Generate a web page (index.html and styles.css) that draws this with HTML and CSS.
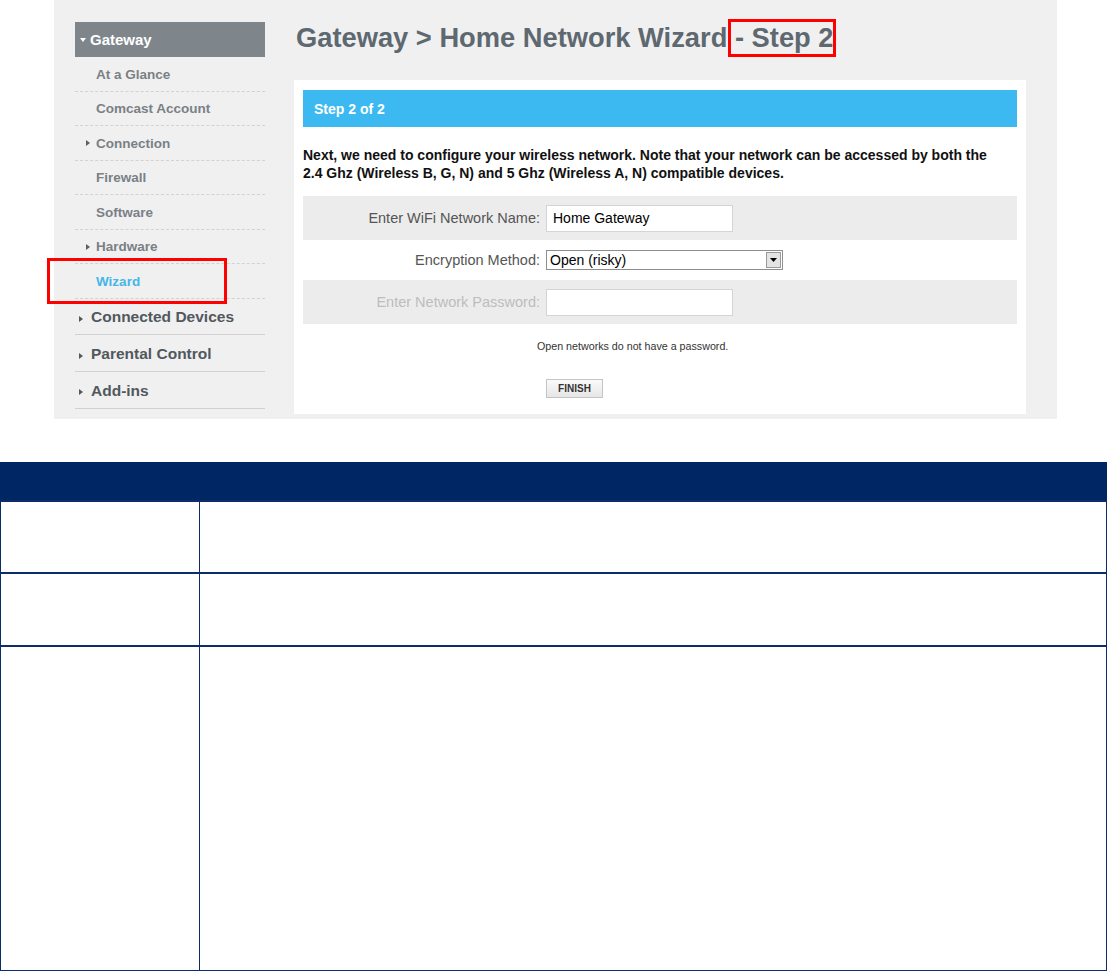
FILE: index.html
```html
<!DOCTYPE html>
<html lang="en">
<head>
    <meta charset="UTF-8">
    <meta name="viewport" content="width=device-width, initial-scale=1.0">
    <title>Home Network Wizard - Step 2</title>
    <link rel="stylesheet" href="styles.css">
</head>
<body>
    <section class="shot">
        <nav class="sidebar">
            <div class="nav-head"><span class="caret-down"></span>Gateway</div>
            <ul class="sub">
                <li>At a Glance</li>
                <li>Comcast Account</li>
                <li class="has-sub">Connection</li>
                <li>Firewall</li>
                <li>Software</li>
                <li class="has-sub">Hardware</li>
                <li class="current">Wizard</li>
            </ul>
            <ul class="top">
                <li>Connected Devices</li>
                <li>Parental Control</li>
                <li>Add-ins</li>
            </ul>
        </nav>

        <div class="content">
            <h1>Gateway &gt; Home Network Wizard<span class="step"> - Step 2</span></h1>

            <div class="card">
                <div class="card-head">Step 2 of 2</div>
                <p class="intro">Next, we need to configure your wireless network. Note that your network can be accessed by both the<br>2.4 Ghz (Wireless B, G, N) and 5 Ghz (Wireless A, N) compatible devices.</p>

                <div class="form-row shade">
                    <label>Enter WiFi Network Name:</label>
                    <input type="text" value="Home Gateway">
                </div>
                <div class="form-row plain">
                    <label>Encryption Method:</label>
                    <div class="select">
                        <span>Open (risky)</span>
                        <span class="sel-btn">
                            <svg width="7" height="4" viewBox="0 0 7 4"><path d="M0 0H7L3.5 4Z" fill="#000"/></svg>
                        </span>
                    </div>
                </div>
                <div class="form-row shade">
                    <label class="off">Enter Network Password:</label>
                    <input type="text" value="">
                </div>

                <div class="note">Open networks do not have a password.</div>
                <button class="finish">FINISH</button>
            </div>
        </div>
    </section>

    <table class="spec">
        <tr class="head"><th></th><th></th></tr>
        <tr class="r1"><td></td><td></td></tr>
        <tr class="r2"><td></td><td></td></tr>
        <tr class="r3"><td></td><td></td></tr>
    </table>
</body>
</html>
```

FILE: styles.css
```css
*{
    box-sizing: border-box;
}
html, body{
    overflow: hidden;
}
body{
    margin: 0;
    padding: 0;
    background-color: #fff;
    font-family: "Liberation Sans", Arial, sans-serif;
}

/* screenshot area */
.shot{
    margin-left: 54px;
    width: 1003px;
    height: 419px;
    background-color: #f0f0f0;
    padding-top: 22px;
    display: flex;
}

/* left nav */
.sidebar{
    width: 190px;
    margin-left: 21px;
}
.nav-head{
    height: 35px;
    background-color: #7e868c;
    color: #fff;
    font-size: 15px;
    font-weight: bold;
    display: flex;
    align-items: center;
    padding-left: 5px;
}
.caret-down{
    width: 0;
    height: 0;
    border-left: 3.5px solid transparent;
    border-right: 3.5px solid transparent;
    border-top: 4px solid #fff;
    margin-right: 4px;
}
.sidebar ul{
    list-style: none;
    margin: 0;
    padding: 0;
}
.sub li{
    height: 34.5px;
    border-bottom: 1px dashed #d2d2d2;
    display: flex;
    align-items: center;
    padding-left: 21px;
    padding-top: 1px;
    font-size: 13.5px;
    font-weight: bold;
    color: #7a8086;
}
.sub li.has-sub{
    padding-left: 11px;
}
.sub li.has-sub::before{
    content: '';
    border-top: 3.5px solid transparent;
    border-bottom: 3.5px solid transparent;
    border-left: 4px solid #5a6066;
    margin-right: 6px;
}
.sub li.current{
    color: #44b6ea;
    position: relative;
}
.sub li.current::after{
    content: '';
    position: absolute;
    left: -28px;
    top: -6px;
    width: 174px;
    height: 40px;
    border: 3px solid #ff0000;
}
.top li{
    height: 36.7px;
    border-bottom: 1px solid #d0d0d0;
    display: flex;
    align-items: center;
    padding-left: 4px;
    padding-top: 2px;
    font-size: 15.5px;
    font-weight: bold;
    color: #51585e;
}
.top li::before{
    content: '';
    border-top: 3px solid transparent;
    border-bottom: 3px solid transparent;
    border-left: 4px solid #51585e;
    margin-right: 8px;
    margin-top: 3px;
}

/* main column */
.content{
    margin-left: 29px;
    width: 732px;
}
h1{
    margin: 0 0 26px;
    padding-left: 2px;
    font-size: 27.3px;
    line-height: 32px;
    color: #5e6870;
}
.step{
    position: relative;
}
.step::after{
    content: '';
    position: absolute;
    left: 1px;
    right: -2px;
    top: -3px;
    bottom: -4px;
    border: 3px solid #ff0000;
}

.card{
    height: 334px;
    background-color: #fff;
    padding: 10px 9px 0;
}
.card-head{
    height: 37px;
    background-color: #3cb9f1;
    color: #fff;
    font-size: 14px;
    font-weight: bold;
    display: flex;
    align-items: center;
    padding-left: 11px;
}
.intro{
    margin: 19px 0 14px;
    font-size: 14px;
    line-height: 18px;
    font-weight: bold;
    color: #111;
}
.form-row{
    display: flex;
    align-items: center;
    height: 44px;
}
.form-row.plain{
    height: 40px;
}
.shade{
    background-color: #ececec;
}
.form-row label{
    width: 237px;
    margin-right: 6px;
    text-align: right;
    font-size: 14.5px;
    color: #555;
}
.form-row label.off{
    color: #bdbdbd;
}
.form-row input{
    width: 187px;
    height: 27px;
    border: 1px solid #d4d4d4;
    background-color: #fff;
    padding: 0 6px;
    font-family: inherit;
    font-size: 14px;
    color: #000;
    outline: none;
}
.select{
    width: 237px;
    height: 20px;
    border: 1px solid #8e8e8e;
    background-color: #fff;
    display: flex;
    align-items: center;
    justify-content: space-between;
    padding: 0 1px 0 3px;
    font-size: 14px;
    color: #000;
}
.sel-btn{
    width: 15px;
    height: 16px;
    border: 1px solid #9a9a9a;
    background-color: #e4e4e4;
    display: flex;
    align-items: center;
    justify-content: center;
}
.note{
    margin: 16px 0 0 234px;
    font-size: 10.7px;
    line-height: 13px;
    color: #333;
}
.finish{
    display: block;
    margin: 26px 0 0 243px;
    width: 57px;
    height: 19px;
    padding: 0;
    border: 1px solid #c4c4c4;
    border-radius: 0;
    background: linear-gradient(#fafafa, #e6e6e6);
    font-family: inherit;
    font-size: 10px;
    font-weight: bold;
    color: #333;
}

/* document table */
.spec{
    width: 1107px;
    margin-top: 43px;
    border-collapse: collapse;
}
.spec th{
    height: 38px;
    background-color: #002664;
    border: 1px solid #002664;
    padding: 0;
}
.spec td{
    border: 1px solid #0d2c6c;
    border-top-width: 2px;
    padding: 0;
}
.spec td:first-child{
    width: 199px;
}
.spec .r1 td{
    height: 72px;
}
.spec .r2 td{
    height: 73px;
}
.spec .r3 td{
    height: 325px;
    border-bottom-width: 2px;
}
```
